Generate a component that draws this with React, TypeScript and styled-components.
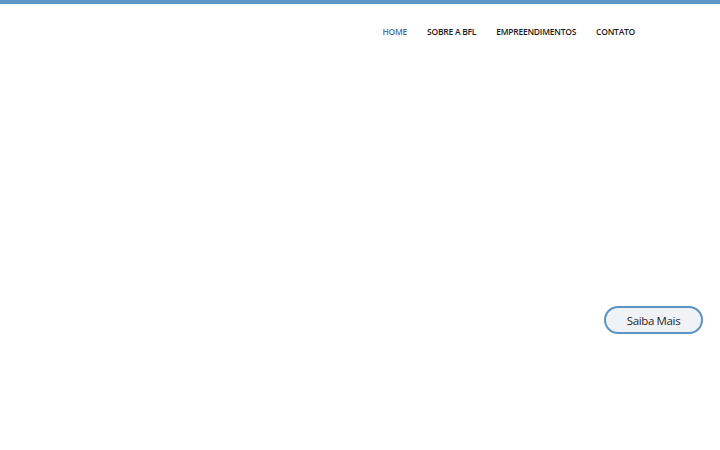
import React from 'react'
import styled, { createGlobalStyle } from 'styled-components'

const Global = createGlobalStyle`
  html, body {
    margin: 0;
    padding: 0;
    background: #ffffff;
    font-family: 'Open Sans', 'Liberation Sans', sans-serif;
  }
`

const Page = styled.div`
  width: 720px;
  height: 450px;
  display: flex;
  flex-direction: column;
  border-top: 4px solid #5b98c9;
  box-sizing: border-box;
  overflow: hidden;
`

const Header = styled.header`
  display: flex;
  justify-content: flex-end;
  padding: 22px 85px 0 0;
  height: 46px;
  box-sizing: border-box;
`

const Nav = styled.nav`
  display: flex;
  gap: 20px;
`

const NavLink = styled.a<{ $active?: boolean }>`
  font-size: 8.5px;
  font-weight: 600;
  letter-spacing: -0.25px;
  text-transform: uppercase;
  text-decoration: none;
  color: ${(p) => (p.$active ? '#50709c' : '#1c1c1c')};
  line-height: 12px;
`

const Hero = styled.section`
  flex: 1;
  display: flex;
  justify-content: flex-end;
  align-items: flex-start;
  padding: 256px 17px 0 0;
`

const Button = styled.button`
  width: 99px;
  height: 28px;
  border-radius: 14px;
  border: 2px solid #5b93c4;
  background: #f1f2f5;
  font-family: 'Open Sans', 'Liberation Sans', sans-serif;
  font-size: 11.5px;
  letter-spacing: -0.35px;
  color: #1f1f1f;
  cursor: pointer;
  padding: 0;
`

const links = ['Home', 'Sobre a BFL', 'Empreendimentos', 'Contato']

export default function App() {
  return (
    <Page>
      <Global />
      <Header>
        <Nav>
          {links.map((l, i) => (
            <NavLink key={l} href="#" $active={i === 0}>
              {l}
            </NavLink>
          ))}
        </Nav>
      </Header>
      <Hero>
        <Button>Saiba Mais</Button>
      </Hero>
    </Page>
  )
}
